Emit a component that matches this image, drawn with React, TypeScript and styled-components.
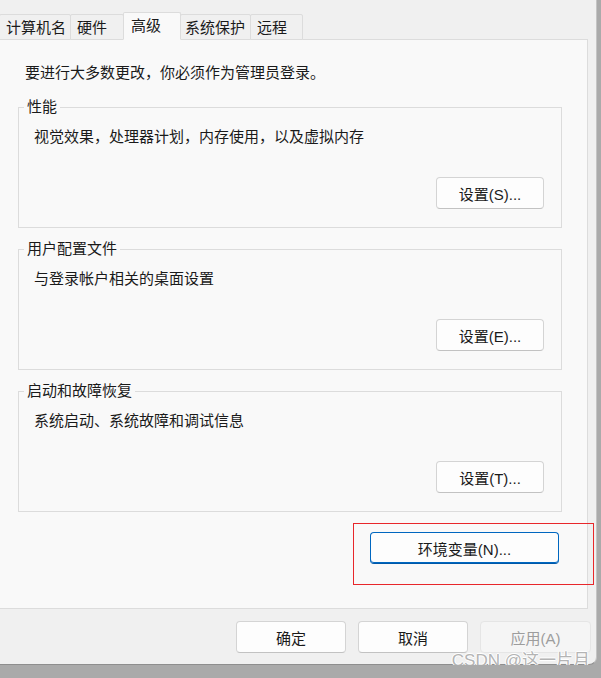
import React from 'react';
import styled, { createGlobalStyle } from 'styled-components';

const GlobalStyle = createGlobalStyle`
  html, body {
    margin: 0;
    padding: 0;
    background: #aaaaaa;
  }
  * {
    box-sizing: border-box;
  }
`;

const FONT = `"Liberation Sans", "Noto Sans CJK SC", sans-serif`;

const tabs = [
  { label: '计算机名', width: 72, pad: 6 },
  { label: '硬件', width: 54, pad: 6 },
  { label: '高级', width: 58, pad: 7, active: true },
  { label: '系统保护', width: 71, pad: 4 },
  { label: '远程', width: 53, pad: 6 },
];

const groups = [
  { title: '性能', text: '视觉效果，处理器计划，内存使用，以及虚拟内存', button: '设置(S)...' },
  { title: '用户配置文件', text: '与登录帐户相关的桌面设置', button: '设置(E)...' },
  { title: '启动和故障恢复', text: '系统启动、系统故障和调试信息', button: '设置(T)...' },
];

const App: React.FC = () => {
  return (
    <>
      <GlobalStyle />
      <Window>
        <TabBar>
          {tabs.map((t) => (
            <Tab key={t.label} $width={t.width} $pad={t.pad} $active={t.active}>
              {t.label}
            </Tab>
          ))}
        </TabBar>

        <Panel>
          <Intro>要进行大多数更改，你必须作为管理员登录。</Intro>

          {groups.map((g) => (
            <Group key={g.title}>
              <Legend>{g.title}</Legend>
              <GroupText>{g.text}</GroupText>
              <GroupActions>
                <Button $width={108}>{g.button}</Button>
              </GroupActions>
            </Group>
          ))}

          <EnvRow>
            <Button $width={189} $primary>环境变量(N)...</Button>
          </EnvRow>
        </Panel>

        <Footer>
          <Button $width={110}>确定</Button>
          <Button $width={110}>取消</Button>
          <Button $width={111} disabled>应用(A)</Button>
        </Footer>

        <Highlight />
        <Watermark>CSDN @这一片月</Watermark>
      </Window>
    </>
  );
};

const Window = styled.div`
  position: relative;
  width: 597px;
  height: 665px;
  background: #f0f0f0;
  border-right: 1px solid #c4c4c4;
  border-bottom: 1px solid #8e8e8e;
  border-bottom-right-radius: 8px;
  display: flex;
  flex-direction: column;
  font-family: ${FONT};
  color: #1a1a1a;
`;

const TabBar = styled.div`
  display: flex;
  align-items: flex-end;
  height: 40px;
  padding-top: 12px;
  margin-left: -1px;
  margin-bottom: -1px;
  position: relative;
  z-index: 1;
`;

const Tab = styled.div<{ $width: number; $pad: number; $active?: boolean }>`
  width: ${({ $width }) => $width}px;
  height: ${({ $active }) => ($active ? 28 : 26)}px;
  padding-left: ${({ $pad }) => $pad}px;
  margin-right: -1px;
  display: flex;
  align-items: center;
  font-size: 15px;
  line-height: 20px;
  background: ${({ $active }) => ($active ? '#f9f9f9' : '#f0f0f0')};
  border: 1px solid #dcdcdc;
  border-bottom-color: ${({ $active }) => ($active ? '#f9f9f9' : '#dcdcdc')};
  border-radius: 2px 2px 0 0;
  position: relative;
  z-index: ${({ $active }) => ($active ? 2 : 1)};
  padding-top: ${({ $active }) => ($active ? 0 : 1)}px;
`;

const Panel = styled.div`
  width: 589px;
  height: 570px;
  margin-left: -1px;
  background: #f9f9f9;
  border: 1px solid #dcdcdc;
  padding: 23px 25px 0 18px;
  display: flex;
  flex-direction: column;
`;

const Intro = styled.div`
  font-size: 15px;
  line-height: 20px;
  padding-left: 7px;
  margin-bottom: 14px;
`;

const Group = styled.fieldset`
  margin: 0 0 11px 0;
  padding: 10px 17px 18px 15px;
  border: 1px solid #dcdcdc;
  min-width: 0;
`;

const Legend = styled.legend`
  font-size: 15px;
  line-height: 20px;
  padding: 0 3px;
  margin-left: -10px;
`;

const GroupText = styled.div`
  font-size: 15px;
  line-height: 20px;
  margin-bottom: 30px;
`;

const GroupActions = styled.div`
  display: flex;
  justify-content: flex-end;
`;

const EnvRow = styled.div`
  display: flex;
  justify-content: flex-end;
  padding-right: 3px;
  margin-top: 9px;
`;

const Button = styled.button<{ $width: number; $primary?: boolean }>`
  width: ${({ $width }) => $width}px;
  height: 32px;
  font-family: ${FONT};
  font-size: 15px;
  color: #1a1a1a;
  background: #fdfdfd;
  border: 1px solid ${({ $primary }) => ($primary ? '#0067c0' : '#d4d4d4')};
  border-bottom-color: ${({ $primary }) => ($primary ? '#0058a8' : '#c2c2c2')};
  border-radius: 4px;
  padding: 0;
  ${({ $primary }) => ($primary ? 'box-shadow: inset 0 -1px 0 #0067c0;' : '')}

  &:disabled {
    background: #f5f5f5;
    border-color: #e5e5e5;
    color: #9d9d9d;
  }
`;

const Footer = styled.div`
  display: flex;
  justify-content: flex-end;
  gap: 12px;
  padding: 12px 5px 0 0;
`;

const Highlight = styled.div`
  position: absolute;
  left: 353px;
  top: 523px;
  width: 241px;
  height: 62px;
  border: 1px solid #e8272b;
  pointer-events: none;
`;

const Watermark = styled.div`
  position: absolute;
  right: 6px;
  bottom: -8px;
  font-size: 17px;
  line-height: 22px;
  color: #b4b4b4;
  text-shadow: 1px 0 0 #fff, -1px 0 0 #fff, 0 1px 0 #fff, 0 -1px 0 #fff;
  white-space: nowrap;
`;

export default App;
